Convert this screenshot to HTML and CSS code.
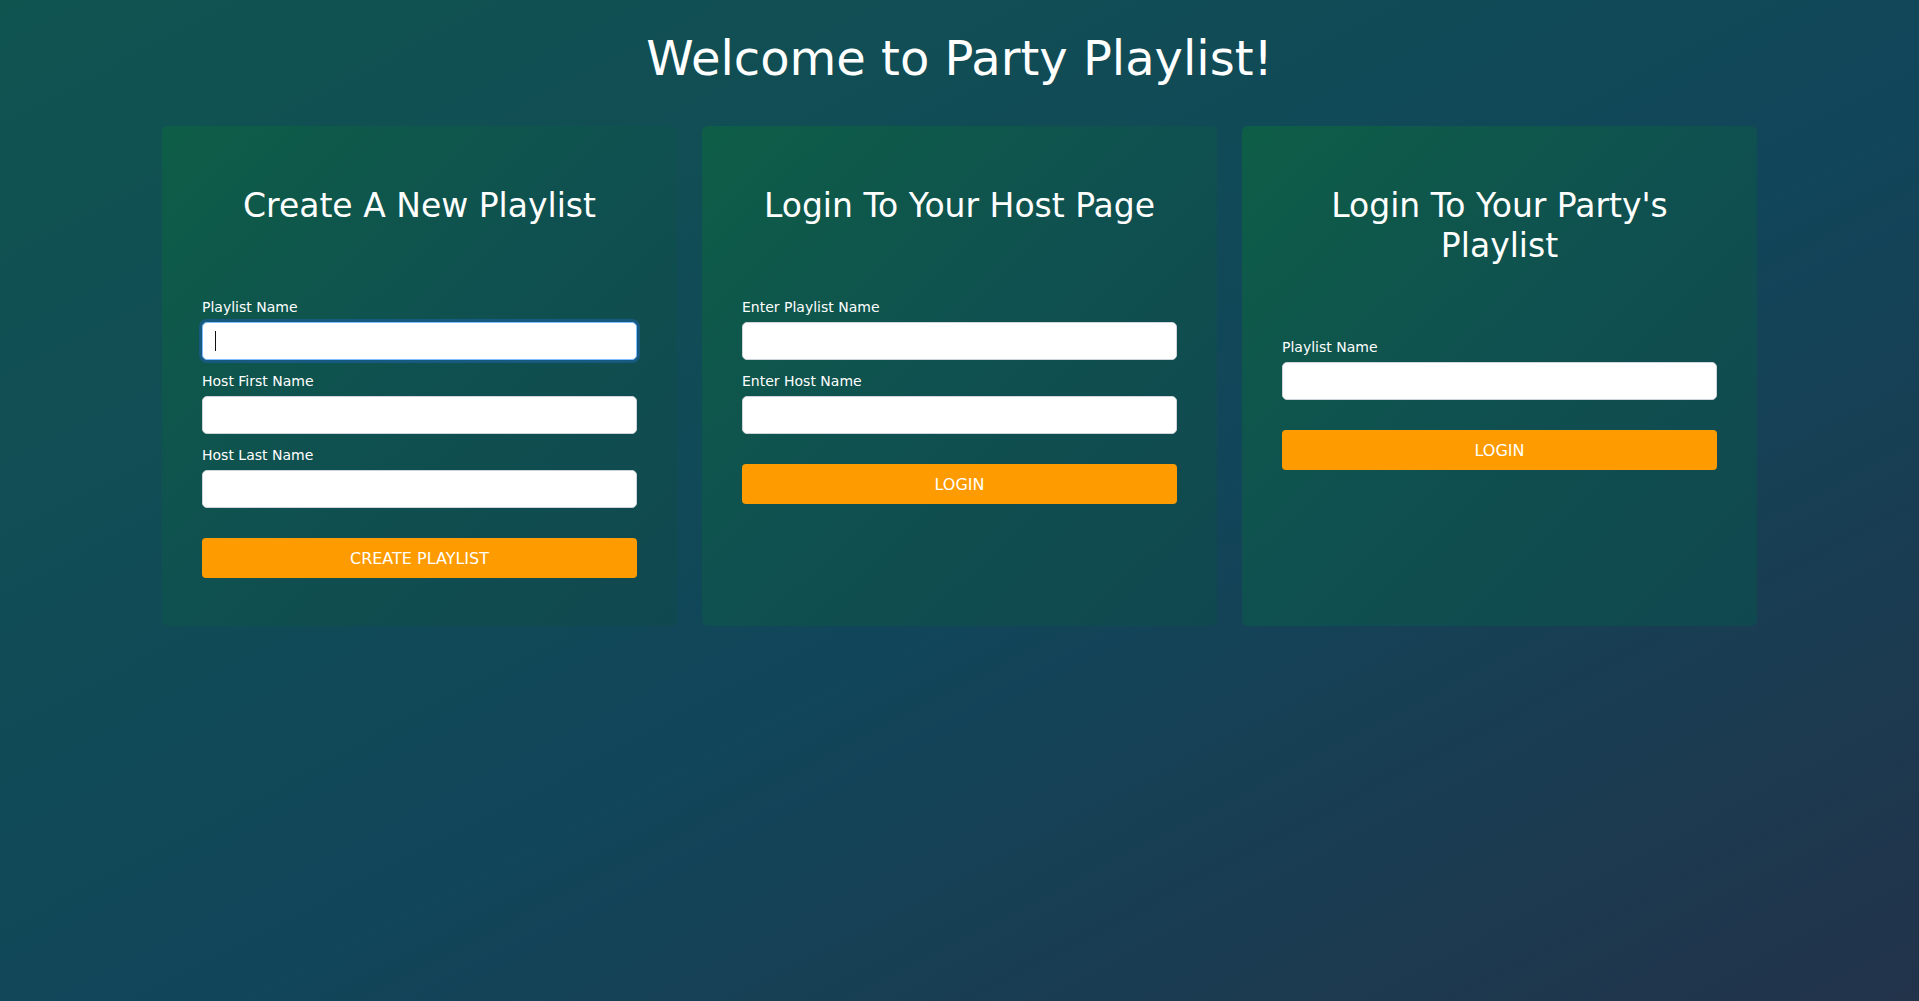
FILE: index.html
```html
<!DOCTYPE html>
<html lang="en">
<head>
<meta charset="utf-8">
<title>Party Playlist</title>
<link rel="stylesheet" href="styles.css">
</head>
<body>
<main class="page">
  <h1 class="page-title">Welcome to Party Playlist!</h1>
  <section class="cards">
    <div class="card">
      <h2 class="card-title">Create A New Playlist</h2>
      <form class="card-form">
        <div class="field">
          <label class="field-label" for="pn">Playlist Name</label>
          <div class="input-wrap">
            <input class="field-input is-focused" id="pn" type="text">
            <span class="caret"></span>
          </div>
        </div>
        <div class="field">
          <label class="field-label" for="hf">Host First Name</label>
          <input class="field-input" id="hf" type="text">
        </div>
        <div class="field">
          <label class="field-label" for="hl">Host Last Name</label>
          <input class="field-input" id="hl" type="text">
        </div>
        <button class="btn" type="button">CREATE PLAYLIST</button>
      </form>
    </div>
    <div class="card">
      <h2 class="card-title">Login To Your Host Page</h2>
      <form class="card-form">
        <div class="field">
          <label class="field-label" for="epn">Enter Playlist Name</label>
          <input class="field-input" id="epn" type="text">
        </div>
        <div class="field">
          <label class="field-label" for="ehn">Enter Host Name</label>
          <input class="field-input" id="ehn" type="text">
        </div>
        <button class="btn" type="button">LOGIN</button>
      </form>
    </div>
    <div class="card">
      <h2 class="card-title">Login To Your Party's Playlist</h2>
      <form class="card-form">
        <div class="field">
          <label class="field-label" for="ppn">Playlist Name</label>
          <input class="field-input" id="ppn" type="text">
        </div>
        <button class="btn" type="button">LOGIN</button>
      </form>
    </div>
  </section>
</main>
</body>
</html>
```
FILE: styles.css
```css
* { box-sizing: border-box; }
html, body { height: 100%; }
body {
  margin: 0;
  font-family: "DejaVu Sans", "Liberation Sans", sans-serif;
  color: #ffffff;
  background: linear-gradient(to bottom right, #105450 0%, #11465a 55%, #22334a 100%);
  min-height: 100vh;
}
.page {
  display: flex;
  flex-direction: column;
  align-items: center;
  padding-top: 30px;
}
.page-title {
  margin: 0;
  font-weight: normal;
  font-size: 48px;
  line-height: 56px;
  text-align: center;
}
.cards {
  display: grid;
  grid-template-columns: repeat(3, 515px);
  column-gap: 25px;
  margin-top: 40px;
}
.card {
  background: linear-gradient(to bottom right, #0e5e47 0%, #0f5050 50%, #10484f 100%);
  border-radius: 6px;
  padding: 60px 40px 48px;
  display: flex;
  flex-direction: column;
}
.card-title {
  margin: 0;
  font-weight: normal;
  font-size: 33px;
  line-height: 40px;
  text-align: center;
}
.card-form {
  margin-top: 71px;
  display: flex;
  flex-direction: column;
}
.field {
  display: flex;
  flex-direction: column;
  margin-bottom: 11px;
}
.field-label {
  font-size: 14px;
  line-height: 20px;
  margin-bottom: 5px;
}
.input-wrap {
  position: relative;
  display: flex;
  flex-direction: column;
}
.field-input {
  height: 38px;
  border: 1px solid #ced4da;
  border-radius: 5px;
  background: #ffffff;
  padding: 6px 12px;
  font-family: inherit;
  font-size: 16px;
  color: #495057;
  outline: none;
}
.field-input.is-focused {
  border-color: #80bdff;
  box-shadow: 0 0 0 3px #175a80;
}
.caret {
  position: absolute;
  left: 13px;
  top: 9px;
  width: 1px;
  height: 20px;
  background: #111111;
}
.btn {
  margin-top: 19px;
  height: 40px;
  border: none;
  border-radius: 4px;
  background: #fe9b00;
  color: #ffffff;
  font-family: inherit;
  font-size: 16px;
  cursor: pointer;
}
```
